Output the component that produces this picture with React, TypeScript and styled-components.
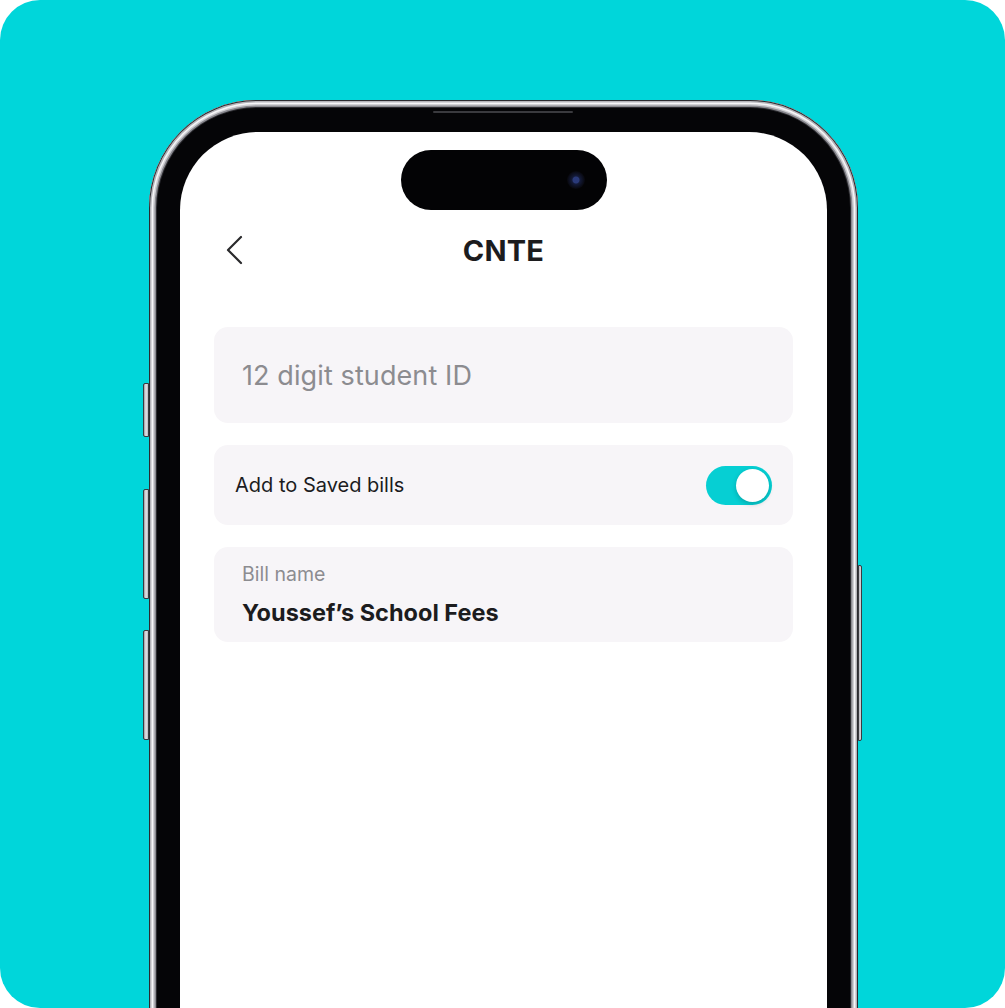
import React from "react";
import styled, { createGlobalStyle } from "styled-components";

const Global = createGlobalStyle`
  html, body { margin: 0; padding: 0; background: #ffffff; }
  body { font-family: Inter, "Noto Sans", "Liberation Sans", sans-serif; }
  * { box-sizing: border-box; }
`;

const Canvas = styled.div`
  width: 1005px;
  height: 1008px;
  background: #00d6da;
  border-radius: 40px;
  overflow: hidden;
  padding: 100px 0 0 149px;
`;

const Phone = styled.div`
  position: relative;
  width: 709px;
  height: 960px;
`;

const Frame = styled.div`
  width: 100%;
  height: 100%;
  border-radius: 108px 108px 0 0;
  background: #050507;
  padding: 32px 31px 0 31px;
  box-shadow:
    inset 0 0 0 1px #2c2c30,
    inset 0 0 0 2.5px #b4b4b9,
    inset 0 0 0 4px #f6f6f8,
    inset 0 0 0 5.5px #d0d0d4,
    inset 0 0 0 7px #8a8a90,
    inset 0 0 0 8px #2a2a2e;
`;

const SideButton = styled.div<{ $side: "left" | "right"; $top: number; $h: number }>`
  position: absolute;
  top: ${(p) => p.$top}px;
  ${(p) => (p.$side === "left" ? "left: -6px;" : "right: -4px;")}
  width: ${(p) => (p.$side === "left" ? 6 : 4)}px;
  height: ${(p) => p.$h}px;
  background: linear-gradient(90deg, #9a9aa0, #e6e6ea 50%, #b8b8bd);
  border: 1px solid #3a3a40;
  border-radius: ${(p) => (p.$side === "left" ? "2px 0 0 2px" : "0 2px 2px 0")};
`;

const Speaker = styled.div`
  position: absolute;
  top: 11px;
  left: 284px;
  width: 140px;
  height: 2px;
  border-radius: 1px;
  background: #3a3a3e;
`;

const Screen = styled.div`
  position: relative;
  width: 100%;
  height: 100%;
  background: #ffffff;
  border-radius: 78px 78px 0 0;
  padding: 93px 34px 0 34px;
  display: flex;
  flex-direction: column;
`;

const Island = styled.div`
  position: absolute;
  top: 18px;
  left: 50%;
  transform: translateX(-50%);
  width: 206px;
  height: 60px;
  border-radius: 30px;
  background: #030305;
  display: flex;
  align-items: center;
  justify-content: flex-end;
  padding-right: 22px;
`;

const Camera = styled.div`
  width: 18px;
  height: 18px;
  border-radius: 50%;
  background: radial-gradient(circle at 50% 50%, #2a3a7a 0 3px, #141b3a 4px, #07070c 9px);
`;

const Header = styled.div`
  position: relative;
  height: 50px;
  display: flex;
  align-items: center;
  justify-content: center;
  margin-bottom: 52px;
`;

const Back = styled.button`
  position: absolute;
  left: 12px;
  top: 50%;
  transform: translateY(-50%);
  background: none;
  border: none;
  padding: 0;
  display: flex;
  cursor: pointer;
`;

const Title = styled.h1`
  margin: 0;
  font-size: 29px;
  font-weight: 700;
  color: #1c1c1e;
  letter-spacing: 0.2px;
`;

const Card = styled.div<{ $h: number; $px: number }>`
  height: ${(p) => p.$h}px;
  background: #f7f5f8;
  border-radius: 14px;
  padding: 0 ${(p) => p.$px}px;
  margin-bottom: 22px;
  display: flex;
`;

const InputCard = styled(Card)`
  align-items: center;
`;

const Placeholder = styled.span`
  font-size: 27px;
  color: #8c8c90;
  font-weight: 400;
  letter-spacing: 0.1px;
`;

const ToggleCard = styled(Card)`
  align-items: center;
  justify-content: space-between;
`;

const Label = styled.span`
  font-size: 20px;
  color: #1c1c1e;
`;

const Toggle = styled.div<{ $on: boolean }>`
  width: 66px;
  height: 39px;
  border-radius: 20px;
  background: ${(p) => (p.$on ? "#06cfd3" : "#d8d8dc")};
  padding: 3px;
  display: flex;
  justify-content: ${(p) => (p.$on ? "flex-end" : "flex-start")};
  align-items: center;
`;

const Knob = styled.div`
  width: 33px;
  height: 33px;
  border-radius: 50%;
  background: #ffffff;
  box-shadow: 0 2px 5px rgba(0, 0, 0, 0.2);
`;

const FieldCard = styled(Card)`
  flex-direction: column;
  justify-content: center;
  gap: 12px;
`;

const FieldLabel = styled.span`
  font-size: 19.5px;
  color: #8c8c90;
`;

const FieldValue = styled.span`
  font-size: 23.5px;
  font-weight: 700;
  color: #1c1c1e;
`;

export default function App() {
  return (
    <>
      <Global />
      <Canvas>
        <Phone>
          <SideButton $side="left" $top={283} $h={54} />
          <SideButton $side="left" $top={389} $h={110} />
          <SideButton $side="left" $top={530} $h={110} />
          <SideButton $side="right" $top={465} $h={176} />
          <Frame>
            <Speaker />
            <Screen>
              <Island>
                <Camera />
              </Island>
              <Header>
                <Back aria-label="Back">
                  <svg width="18" height="30" viewBox="0 0 18 30" fill="none">
                    <path d="M15 2 L2 15 L15 28" stroke="#2a2a2c" strokeWidth="2.2" strokeLinecap="round" strokeLinejoin="round" />
                  </svg>
                </Back>
                <Title>CNTE</Title>
              </Header>
              <InputCard $h={96} $px={28}>
                <Placeholder>12 digit student ID</Placeholder>
              </InputCard>
              <ToggleCard $h={80} $px={21}>
                <Label>Add to Saved bills</Label>
                <Toggle $on>
                  <Knob />
                </Toggle>
              </ToggleCard>
              <FieldCard $h={95} $px={28}>
                <FieldLabel>Bill name</FieldLabel>
                <FieldValue>Youssef’s School Fees</FieldValue>
              </FieldCard>
            </Screen>
          </Frame>
        </Phone>
      </Canvas>
    </>
  );
}
